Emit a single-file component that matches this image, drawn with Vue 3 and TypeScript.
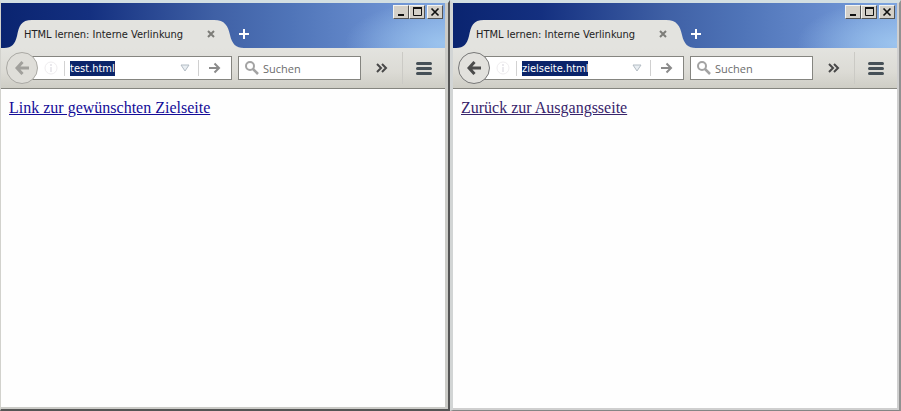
<script setup lang="ts">
interface BrowserWindow {
  id: string
  title: string
  url: string
  link: string
  href: string
  visited: boolean
}

const windows: BrowserWindow[] = [
  { id: 'start', title: 'HTML lernen: Interne Verlinkung', url: 'test.html', link: 'Link zur gewünschten Zielseite', href: '#zielseite', visited: false },
  { id: 'target', title: 'HTML lernen: Interne Verlinkung', url: 'zielseite.html', link: 'Zurück zur Ausgangsseite', href: '#test', visited: true },
]
</script>

<template>
  <main class="desktop">
    <section v-for="w in windows" :key="w.id" class="window" :class="w.id">
      <header class="titlebar">
        <div class="tab">
          <svg class="tab-shape" viewBox="0 0 240 28" preserveAspectRatio="none" aria-hidden="true">
            <path d="M0 28C8 28 11 24 13 16C15 6 17 0 28 0H210C221 0 224 6 226 15C228 24 232 28 240 28Z" fill="#e3e3df" />
          </svg>
          <span class="tab-title">{{ w.title }}</span>
          <button class="tab-close" type="button" aria-label="Tab schließen">
            <svg width="8" height="8" viewBox="0 0 8 8"><path d="M1 1L7 7M7 1L1 7" stroke="#7d7d78" stroke-width="2" /></svg>
          </button>
        </div>
        <button class="new-tab" type="button" aria-label="Neuer Tab">
          <svg width="10" height="10" viewBox="0 0 10 10"><path d="M5 0V10M0 5H10" stroke="#fff" stroke-width="2" /></svg>
        </button>
        <div class="controls">
          <button type="button" aria-label="Minimieren">
            <svg width="12" height="10" viewBox="0 0 12 10"><path d="M3 8H9" stroke="#111" stroke-width="2" /></svg>
          </button>
          <button type="button" aria-label="Maximieren">
            <svg width="12" height="10" viewBox="0 0 12 10"><path d="M2 1H11" stroke="#111" stroke-width="2" /><path d="M2.500 1V8.500H10.500V1" stroke="#111" fill="none" /></svg>
          </button>
          <button class="close" type="button" aria-label="Schließen">
            <svg width="12" height="10" viewBox="0 0 12 10"><path d="M2.500 1.500L9.500 8.500M9.500 1.500L2.500 8.500" stroke="#111" stroke-width="1.700" /></svg>
          </button>
        </div>
      </header>

      <nav class="toolbar">
        <button class="back" type="button" aria-label="Zurück">
          <svg width="14" height="14" viewBox="0 0 14 14"><path d="M7.500 1L2 7L7.500 13M2 7H14" fill="none" stroke="currentColor" stroke-width="3" /></svg>
        </button>
        <div class="address">
          <svg class="info" width="14" height="14" viewBox="0 0 14 14" aria-hidden="true">
            <circle cx="7" cy="7" r="6" fill="none" stroke="#efedef" /><path d="M7 3V5M7 6V11" stroke="#e3e2e8" stroke-width="1.500" />
          </svg>
          <div class="url-box"><input class="url" type="text" :value="w.url" aria-label="Adresse" spellcheck="false" /></div>
          <button class="history" type="button" aria-label="Verlauf anzeigen">
            <svg width="10" height="8" viewBox="0 0 10 8"><path d="M1 1H9L5 7Z" fill="#e9eef2" stroke="#b3bcc4" /></svg>
          </button>
          <button class="go" type="button" aria-label="Seite laden">
            <svg width="12" height="12" viewBox="0 0 12 12"><path d="M0 6H10M5.500 1.500L10 6L5.500 10.500" fill="none" stroke="#8b8b8b" stroke-width="2" /></svg>
          </button>
        </div>
        <label class="search">
          <svg width="14" height="14" viewBox="0 0 14 14" aria-hidden="true"><circle cx="5" cy="5" r="4" fill="none" stroke="#a3a3a3" stroke-width="2" /><path d="M8 8L13 13" stroke="#a3a3a3" stroke-width="2.500" /></svg>
          <input type="text" placeholder="Suchen" aria-label="Suchen" />
        </label>
        <button class="more" type="button" aria-label="Weitere Werkzeuge">
          <svg width="12" height="10" viewBox="0 0 12 10"><path d="M1 1L5 5L1 9M6 1L10 5L6 9" fill="none" stroke="#484848" stroke-width="2" /></svg>
        </button>
        <button class="menu" type="button" aria-label="Menü öffnen">
          <svg width="16" height="13" viewBox="0 0 16 13"><path d="M1.500 1.500H14.500M1.500 6.500H14.500M1.500 11.500H14.500" stroke="#465057" stroke-width="3" stroke-linecap="round" /></svg>
        </button>
      </nav>

      <article class="page">
        <a :href="w.href" :class="{ visited: w.visited }">{{ w.link }}</a>
      </article>
    </section>
  </main>
</template>

<style>
body {
  background: #fff;
}
</style>

<style scoped>
.desktop {
  display: grid;
  grid-template-columns: 450fr 451fr;
  min-height: 100vh;
  font-family: "DejaVu Sans Condensed", "DejaVu Sans", sans-serif;
  font-size: 11px;
}
.window {
  box-sizing: border-box;
  display: flex;
  flex-direction: column;
  min-width: 0;
  border-style: solid;
  border-width: 3px 2px 2px 1px;
  border-color: #d3dfe2 #555 #555 #d2d2cd;
  box-shadow: inset -3px -2px #cbcbc7;
  padding: 0 3px 2px 0;
}
.target {
  border-width: 3px 2px 1px 3px;
  border-color: #d3dfe2 #919191 #858585 #d2d5d5;
  box-shadow: inset -2px -2px #cfcfcf;
  padding: 0 2px 2px 0;
}
button {
  display: flex;
  align-items: center;
  justify-content: center;
  padding: 0;
  border: 0;
  background: none;
  color: inherit;
}
svg {
  flex: none;
}
input {
  min-width: 0;
  padding: 0;
  border: 0;
  outline: 0;
  background: none;
  font: inherit;
}
.titlebar {
  display: flex;
  height: 45px;
  border-bottom: 0;
  background:
    radial-gradient(ellipse 100px 44px at 100% 90%, #9cc4ee, #9cc4ee00),
    linear-gradient(90deg, #0a2470 0%, #143080 20%, #3f60a5 48%, #4f74b8 65%, #6489cb 82%, #7ba2de 100%);
}
.tab {
  position: relative;
  display: flex;
  align-items: center;
  box-sizing: border-box;
  width: 240px;
  height: 28px;
  margin-top: 17px;
  padding: 0 24px 0 20px;
  margin-left: 3px;
}
.tab-shape {
  position: absolute;
  inset: 0;
  width: 100%;
  height: 100%;
}
.tab-title {
  position: relative;
  flex: 1;
  white-space: nowrap;
  color: #222;
}
.tab-close {
  position: relative;
  width: 12px;
  height: 16px;
  margin-right: 3px;
}
.new-tab {
  width: 16px;
  height: 28px;
  margin: 17px 0 0 -8px;
}
.controls {
  display: flex;
  margin: 2px 2px 0 auto;
}
.controls button {
  box-sizing: border-box;
  width: 16px;
  height: 14px;
  border: 1px solid;
  border-color: #f4f4f0 #555 #555 #f4f4f0;
  background: #d4d0c8;
}
.controls .close {
  margin-left: 2px;
}
.toolbar {
  display: flex;
  align-items: center;
  box-sizing: border-box;
  height: 41px;
  padding-left: 5px;
  border-bottom: 1px solid #85857f;
  background: linear-gradient(#e3e3df, #dcdbd5 60%, #cecdc5);
}
.back {
  position: relative;
  z-index: 1;
  flex: none;
  box-sizing: border-box;
  width: 32px;
  height: 32px;
  border: 1px solid #aaa9a4;
  border-radius: 50%;
  background: #dfded9;
  color: #a1a09c;
}
.target .back {
  border-color: #777;
  background: #e2e1dd;
  color: #4b4b4b;
}
.address {
  display: flex;
  align-items: center;
  flex: 1;
  box-sizing: border-box;
  height: 24px;
  min-width: 0;
  margin-left: -6px;
  padding-left: 12px;
  border: 1px solid #858580;
  border-left: 0;
  background: #fff;
}
.url-box {
  display: flex;
  flex: 1;
  min-width: 0;
  margin-left: 6px;
  padding-left: 5px;
  border-left: 1px solid #d2d2d2;
}
.url {
  field-sizing: content;
  height: 15px;
  background: #0a246a;
  color: #fff;
}
.history {
  width: 20px;
  height: 16px;
  margin-right: 3px;
}
.go {
  width: 33px;
  height: 16px;
  border-left: 1px solid #d0d0d0;
}
.search {
  display: flex;
  align-items: center;
  gap: 4px;
  box-sizing: border-box;
  width: 123px;
  height: 24px;
  margin-left: 6px;
  padding: 0 6px;
  border: 1px solid #858580;
  background: #fff;
}
.search input {
  flex: 1;
  font-family: "Open Sans", sans-serif;
}
.search input::placeholder {
  color: #6c6c6c;
  opacity: 1;
}
.more {
  width: 41px;
  height: 32px;
}
.menu {
  width: 43px;
  height: 32px;
  border-left: 1px solid #cbcac5;
}
.page {
  flex: 1;
  padding: 9px 8px;
  background: #fefefe;
  font-family: "Liberation Serif", serif;
  font-size: 16px;
  line-height: 20px;
}
.page a {
  color: #140c98;
}
.page a.visited {
  color: #38246b;
}
</style>
